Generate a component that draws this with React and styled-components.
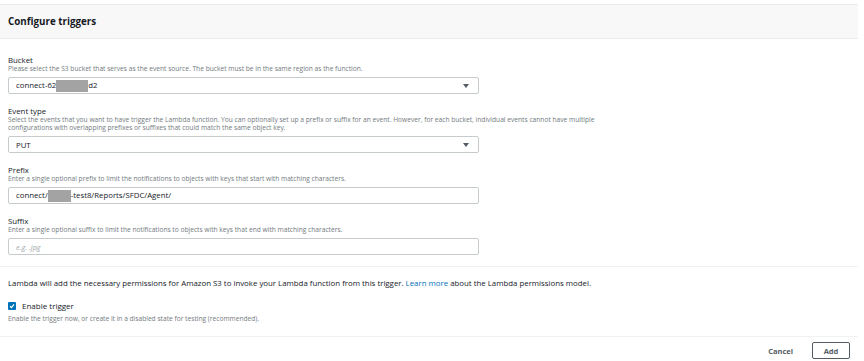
import React from 'react'
import styled, { createGlobalStyle } from 'styled-components'

const Global = createGlobalStyle`
  body {
    margin: 0;
    background: #fff;
    font-family: "Open Sans", "Liberation Sans", sans-serif;
    color: #16191f;
  }
`

const Panel = styled.div`
  width: 858px;
  margin-top: 4px;
  border-top: 1px solid #eaeded;
`

const Header = styled.div`
  height: 33px;
  background: #f8f8f8;
  border-bottom: 1px solid #eaeded;
  display: flex;
  align-items: center;
  padding: 0 8px;
`

const Title = styled.h2`
  margin: 0;
  font-size: 9.8px;
  font-weight: 700;
  color: #16191f;
`

const Body = styled.div`
  padding: 4px 8px 11px;
  border-bottom: 1px solid #f0f1f1;
`

const Field = styled.div`
  margin-top: 12px;
`

const Label = styled.div`
  font-size: 7.8px;
  line-height: 10px;
  color: #16191f;
`

const Hint = styled.div`
  font-size: 6.65px;
  line-height: 8px;
  color: #737b80;
  white-space: nowrap;
`

const Box = styled.div`
  margin-top: 4px;
  width: 471px;
  height: 17px;
  box-sizing: border-box;
  border: 1px solid #c6cccd;
  border-radius: 2px;
  display: flex;
  align-items: center;
  justify-content: space-between;
  padding: 0 9px 0 7px;
  font-size: ${p => (p.$placeholder ? '7.3px' : '7.8px')};
  color: ${p => (p.$placeholder ? '#a2a9aa' : '#16191f')};
  font-style: ${p => (p.$placeholder ? 'italic' : 'normal')};
`

const Redacted = styled.span`
  display: inline-block;
  width: ${p => p.$w}px;
  height: 12px;
  vertical-align: middle;
  background: #a3a3a3;
`

const Arrow = styled.span`
  width: 0;
  height: 0;
  border-left: 3px solid transparent;
  border-right: 3px solid transparent;
  border-top: 4px solid #545b64;
`

const Notes = styled.div`
  padding: 11px 8px 13px;
  border-bottom: 1px solid #f0f1f1;
`

const Note = styled.p`
  margin: 0;
  font-size: 7.85px;
  line-height: 10px;
  color: #16191f;
  white-space: nowrap;
`

const Link = styled.a`
  color: #0073bb;
  text-decoration: none;
`

const CheckRow = styled.label`
  margin-top: 12px;
  display: flex;
  align-items: center;
  gap: 6px;
  font-size: 8px;
  color: #16191f;
`

const Check = styled.span`
  width: 8px;
  height: 8px;
  border-radius: 1px;
  background: #0073bb;
  display: flex;
  align-items: center;
  justify-content: center;
`

const CheckHint = styled(Hint)`
  margin-top: 4px;
`

const Footer = styled.div`
  width: 858px;
  display: flex;
  justify-content: flex-end;
  align-items: center;
  gap: 19px;
  padding: 5px 8px 0 0;
  box-sizing: border-box;
`

const TextButton = styled.button`
  border: none;
  background: none;
  padding: 0;
  font-family: inherit;
  font-size: 7.5px;
  font-weight: 700;
  color: #545b64;
`

const Button = styled.button`
  width: 38px;
  height: 17px;
  border: 1px solid #545b64;
  border-radius: 2px;
  background: #fff;
  font-family: inherit;
  font-size: 7.5px;
  font-weight: 700;
  color: #545b64;
  padding: 0;
`

const Select = ({ children }) => (
  <Box>
    <span>{children}</span>
    <Arrow />
  </Box>
)

export default function App() {
  return (
    <>
      <Global />
      <Panel>
        <Header>
          <Title>Configure triggers</Title>
        </Header>
        <Body>
          <Field>
            <Label>Bucket</Label>
            <Hint>Please select the S3 bucket that serves as the event source. The bucket must be in the same region as the function.</Hint>
            <Select>
              connect-62<Redacted $w={32} />d2
            </Select>
          </Field>
          <Field>
            <Label>Event type</Label>
            <Hint>
              Select the events that you want to have trigger the Lambda function. You can optionally set up a prefix or suffix for an event. However, for each bucket, individual events cannot have multiple
              <br />
              configurations with overlapping prefixes or suffixes that could match the same object key.
            </Hint>
            <Select>PUT</Select>
          </Field>
          <Field>
            <Label>Prefix</Label>
            <Hint>Enter a single optional prefix to limit the notifications to objects with keys that start with matching characters.</Hint>
            <Box>
              <span>
                connect/<Redacted $w={23} />-test8/Reports/SFDC/Agent/
              </span>
            </Box>
          </Field>
          <Field>
            <Label>Suffix</Label>
            <Hint>Enter a single optional suffix to limit the notifications to objects with keys that end with matching characters.</Hint>
            <Box $placeholder>e.g. .jpg</Box>
          </Field>
        </Body>
        <Notes>
          <Note>
            Lambda will add the necessary permissions for Amazon S3 to invoke your Lambda function from this trigger. <Link href="#">Learn more</Link> about the Lambda permissions model.
          </Note>
          <CheckRow>
            <Check>
              <svg width="6" height="6" viewBox="0 0 6 6">
                <path d="M1 3.2 L2.5 4.6 L5 1.4" fill="none" stroke="#fff" strokeWidth="1.2" />
              </svg>
            </Check>
            Enable trigger
          </CheckRow>
          <CheckHint>Enable the trigger now, or create it in a disabled state for testing (recommended).</CheckHint>
        </Notes>
        <Footer>
          <TextButton>Cancel</TextButton>
          <Button>Add</Button>
        </Footer>
      </Panel>
    </>
  )
}
